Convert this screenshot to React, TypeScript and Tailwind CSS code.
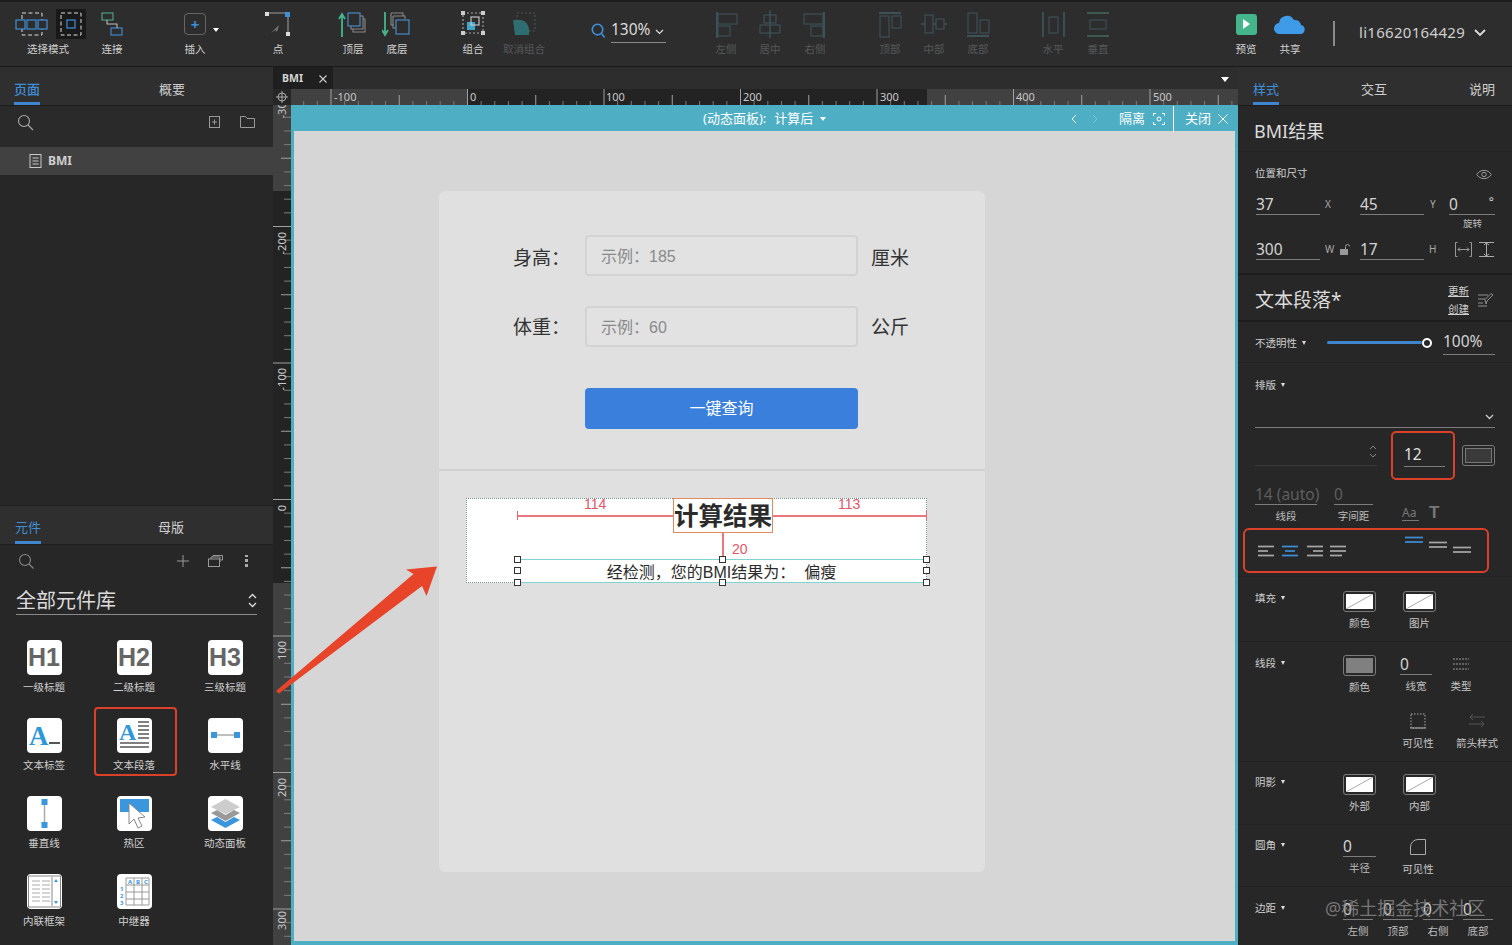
import React from "react";

const ToolItem = ({ label, dim, className, children }: { label: string; dim?: boolean; className?: string; children: React.ReactNode }) => (
  <div className={`flex w-[44px] shrink-0 flex-col items-center ${className ?? ""}`}>
    <div className="flex h-[30px] items-center justify-center">{children}</div>
    <span className={`mt-[2px] whitespace-nowrap text-[10.5px] leading-[16px] ${dim ? "text-[#55595a]" : "text-[#d2d2d2]"}`}>{label}</span>
  </div>
);

const Ic = ({ w = 30, h = 28, children }: { w?: number; h?: number; children: React.ReactNode }) => (
  <svg width={w} height={h} viewBox={`0 0 ${w} ${h}`} fill="none" strokeWidth="1.1">{children}</svg>
);

const AlignIcon = ({ kind }: { kind: string }) => {
  const c = "#3c5258";
  if (kind === "left") return <Ic><path d="M6 2v26" stroke={c} strokeWidth="2" /><rect x="7" y="4" width="19" height="10" stroke={c} /><rect x="7" y="16" width="12" height="10" stroke={c} /></Ic>;
  if (kind === "center") return <Ic><path d="M15 0v28" stroke={c} strokeWidth="1.5" /><rect x="9" y="5" width="12" height="8" stroke={c} /><rect x="5" y="15" width="20" height="8" stroke={c} /></Ic>;
  if (kind === "right") return <Ic><path d="M24 2v26" stroke={c} strokeWidth="2" /><rect x="4" y="4" width="19" height="10" stroke={c} /><rect x="11" y="16" width="12" height="10" stroke={c} /></Ic>;
  if (kind === "top") return <Ic><path d="M4 3h22" stroke={c} strokeWidth="2" /><rect x="5" y="6" width="9" height="21" stroke={c} /><rect x="17" y="6" width="9" height="12" stroke={c} /></Ic>;
  if (kind === "mid") return <Ic><path d="M2 14h26" stroke={c} strokeWidth="1.5" /><rect x="6" y="5" width="8" height="18" fill="#2d2d2d" stroke={c} /><rect x="17" y="9" width="8" height="10" fill="#2d2d2d" stroke={c} /></Ic>;
  if (kind === "bottom") return <Ic><path d="M4 26h22" stroke={c} strokeWidth="2" /><rect x="5" y="3" width="9" height="20" stroke={c} /><rect x="17" y="10" width="9" height="13" stroke={c} /></Ic>;
  if (kind === "h") return <Ic><path d="M5 2v25M26 2v25" stroke={c} strokeWidth="1.8" /><rect x="11" y="7" width="9" height="16" stroke={c} /></Ic>;
  return <Ic><path d="M4 3h22M4 26h22" stroke="#3c5a50" strokeWidth="1.8" /><rect x="7" y="10" width="16" height="9" stroke={c} /></Ic>;
};

const Toolbar = () => (
  <div className="flex h-[67px] shrink-0 border-b border-[#191919] border-t-2 border-t-[#1d1d1d] bg-[#2d2d2d] pt-[7px]">
    <div className="ml-[8px] flex w-[80px] shrink-0 flex-col items-center">
      <div className="flex h-[30px] items-center">
        <svg width="76" height="30" viewBox="0 0 76 30" fill="none">
          <rect x="12" y="4" width="20" height="22" stroke="#ddd" strokeDasharray="4 2.5" />
          <rect x="6" y="11" width="9" height="9" fill="#2d2d2d" stroke="#3f8ed8" strokeWidth="1.2" />
          <rect x="17" y="11" width="9" height="9" fill="#2d2d2d" stroke="#3f8ed8" strokeWidth="1.2" />
          <rect x="28" y="11" width="9" height="9" fill="#2d2d2d" stroke="#3f8ed8" strokeWidth="1.2" />
          <rect x="46" y="0" width="30" height="30" fill="#191919" />
          <rect x="51" y="4" width="20" height="22" stroke="#ddd" strokeDasharray="4 2.5" />
          <rect x="57" y="11" width="8" height="8" stroke="#3f8ed8" strokeWidth="1.2" />
        </svg>
      </div>
      <span className="mt-[2px] text-[10.5px] leading-[16px] text-[#d2d2d2]">选择模式</span>
    </div>
    <ToolItem label="连接" className="ml-[2px]">
      <Ic>
        <rect x="5" y="3" width="11" height="7" stroke="#4fa888" />
        <rect x="14" y="18" width="11" height="7" stroke="#3f8ed8" />
        <path d="M10 10v4h10v4" stroke="#bbb" />
      </Ic>
    </ToolItem>
    <ToolItem label="插入" className="ml-[39px]">
      <div className="relative flex h-[22px] w-[22px] items-center justify-center rounded-[4px] border border-[#666] text-[15px] font-bold leading-none text-[#3f8ed8]">
        +
        <span className="absolute left-[28px] top-[14px] h-0 w-0 border-x-[3px] border-t-[4px] border-x-transparent border-t-white" />
      </div>
    </ToolItem>
    <ToolItem label="点" className="ml-[39px]">
      <Ic>
        <path d="M4 3h21v21" stroke="#999" />
        <rect x="2" y="2" width="4" height="4" fill="#ddd" />
        <rect x="22" y="2" width="5" height="5" fill="#3f8ed8" />
        <rect x="23" y="22" width="4" height="4" fill="#ddd" />
        <path d="M8 23l8-8-2 7-1.5-2z" fill="#777" />
      </Ic>
    </ToolItem>
    <ToolItem label="顶层" className="ml-[31px]">
      <Ic>
        <path d="M4 27V6M1 9l3-5 3 5" stroke="#45b58c" strokeWidth="1.8" />
        <rect x="10" y="3" width="12" height="13" fill="#2d2d2d" stroke="#4a93d4" />
        <path d="M22 6h3v13H13v-3M25 9h2v13H15v-3" stroke="#888" />
      </Ic>
    </ToolItem>
    <ToolItem label="底层">
      <Ic>
        <path d="M3 2v21M0 20l3 5 3-5" stroke="#45b58c" strokeWidth="1.8" />
        <path d="M9 3h12v3M11 6h12v3" stroke="#888" />
        <path d="M9 3v12h3M11 6v12h3" stroke="#888" />
        <rect x="14" y="10" width="13" height="14" stroke="#4a93d4" />
      </Ic>
    </ToolItem>
    <ToolItem label="组合" className="ml-[32px]">
      <Ic>
        <rect x="5" y="3" width="20" height="20" stroke="#aaa" strokeDasharray="2 2" />
        <rect x="3" y="1" width="4" height="4" fill="#ccc" />
        <rect x="23" y="1" width="4" height="4" fill="#ccc" />
        <rect x="3" y="21" width="4" height="4" fill="#ccc" />
        <rect x="23" y="21" width="4" height="4" fill="#ccc" />
        <rect x="9" y="12" width="8" height="8" fill="#3fa6c8" />
        <rect x="13" y="7" width="8" height="8" stroke="#ccc" />
      </Ic>
    </ToolItem>
    <ToolItem label="取消组合" dim className="ml-[7px]">
      <Ic>
        <rect x="8" y="3" width="18" height="18" stroke="#4a5457" strokeDasharray="2 2" />
        <path d="M4 10h8a11 11 0 0 1 8 9v6H6z" fill="#2e6e70" />
      </Ic>
    </ToolItem>
    <div className="ml-[44px] mt-[6px] flex h-[30px] w-[78px] shrink-0 items-center">
      <svg width="16" height="17" viewBox="0 0 17 18" fill="none" stroke="#3f8ed8" strokeWidth="1.7">
        <circle cx="8" cy="8" r="5.6" />
        <path d="M12 12l3.5 4.500" />
      </svg>
      <div className="ml-[5px] flex h-[25px] w-[55px] items-center whitespace-nowrap border-b border-[#8a8a8a] text-[15.5px] leading-none text-[#dcdcdc]">
        130%
        <svg className="ml-[5px] mt-[4px]" width="9" height="6" viewBox="0 0 9 6" fill="none" stroke="#ddd" strokeWidth="1.2"><path d="M1 1l3.500 3.500L8 1" /></svg>
      </div>
    </div>
    <ToolItem label="左侧" dim className="ml-[36px]"><AlignIcon kind="left" /></ToolItem>
    <ToolItem label="居中" dim><AlignIcon kind="center" /></ToolItem>
    <ToolItem label="右侧" dim className="ml-[1px]"><AlignIcon kind="right" /></ToolItem>
    <ToolItem label="顶部" dim className="ml-[31px]"><AlignIcon kind="top" /></ToolItem>
    <ToolItem label="中部" dim><AlignIcon kind="mid" /></ToolItem>
    <ToolItem label="底部" dim><AlignIcon kind="bottom" /></ToolItem>
    <ToolItem label="水平" dim className="ml-[31px]"><AlignIcon kind="h" /></ToolItem>
    <ToolItem label="垂直" dim className="ml-[1px]"><AlignIcon kind="v" /></ToolItem>
    <ToolItem label="预览" className="ml-[104px]">
      <div className="flex h-[21px] w-[21px] items-center justify-center rounded-[3px] bg-[#45b58c]">
        <div className="h-0 w-0 border-y-[5px] border-l-[7px] border-y-transparent border-l-white" />
      </div>
    </ToolItem>
    <ToolItem label="共享">
      <svg width="32" height="21" viewBox="0 0 32 21">
        <path d="M6 20a5.500 5.500 0 0 1-1-11 8 8 0 0 1 15-3 6 6 0 0 1 7 5 4.600 4.600 0 0 1 0 9z" fill="#3f9be8" />
      </svg>
    </ToolItem>
    <div className="ml-[21px] mt-[12px] h-[25px] w-[2px] bg-[#8a8a8a]" />
    <div className="ml-[24px] mt-[13px] text-[15px] leading-[20px] tracking-[0.3px] text-[#cfcfcf]">li16620164429</div>
    <svg className="ml-[9px] mt-[20px]" width="12" height="8" viewBox="0 0 12 8" fill="none" stroke="#ddd" strokeWidth="1.8"><path d="M1 1l5 5 5-5" /></svg>
  </div>
);

const Widget = ({ label, children }: { label: string; children: React.ReactNode }) => (
  <div className="flex h-[78px] flex-col items-center">
    <div className="flex h-[35px] w-[35px] items-center justify-center overflow-hidden rounded-[4px] bg-white">{children}</div>
    <span className="mt-[4px] whitespace-nowrap text-[10.5px] leading-[16px] text-[#d0d0d0]">{label}</span>
  </div>
);

const HeadingIcon = ({ t }: { t: string }) => (
  <span className="font-['Liberation_Sans',sans-serif] text-[25px] font-bold leading-none text-[#666]">{t}</span>
);

const LeftPanel = () => (
  <div className="flex w-[273px] shrink-0 flex-col overflow-hidden bg-[#272727]">
    <div className="flex h-[39px] shrink-0 border-b border-[#1c1c1c] bg-[#2f2f2f] pl-[14px] text-[13px]">
      <div className="flex h-[38px] w-[26px] items-start justify-center border-b-[3px] border-[#3f86cf] pt-[13px] font-medium leading-[18px] text-[#3f8ed8]">页面</div>
      <div className="ml-[119px] pt-[13px] leading-[18px] text-[#cfcfcf]">概要</div>
    </div>
    <div className="flex h-[41px] shrink-0 items-center bg-[#2a2a2a] pb-[9px] pl-[17px]">
      <svg width="17" height="17" viewBox="0 0 17 17" fill="none" stroke="#aaa" strokeWidth="1.1"><circle cx="7" cy="7" r="5.500" /><path d="M11 11l5 5" /></svg>
      <svg className="ml-[175px]" width="11" height="12" viewBox="0 0 11 12" fill="none" stroke="#999"><rect x="0.5" y="0.5" width="10" height="11" /><path d="M5.500 3.500v5M3 6h5" /></svg>
      <svg className="ml-[20px]" width="15" height="12" viewBox="0 0 15 12" fill="none" stroke="#999"><path d="M0.500 11.500V0.500h5l1.500 2h7.500v9z" /></svg>
    </div>
    <div className="flex h-[28px] shrink-0 items-center bg-[#414141] pl-[29px] text-[12px] font-bold text-[#cfcfcf]">
      <svg className="mr-[6px]" width="13" height="14" viewBox="0 0 13 14" fill="none" stroke="#c8c8c8"><rect x="1" y="0.5" width="11" height="13" /><path d="M3.500 4h6M3.500 7h6M3.500 10h6" /></svg>
      BMI
    </div>
    <div className="h-[330px] shrink-0" />
    <div className="flex h-[40px] shrink-0 border-y border-[#1f1f1f] bg-[#2f2f2f] pl-[15px] text-[13px]">
      <div className="flex h-[38px] w-[26px] justify-center border-b-[3px] border-[#3f86cf] pt-[12px] leading-[18px] text-[#3f8ed8]">元件</div>
      <div className="ml-[117px] pt-[12px] leading-[18px] text-[#cfcfcf]">母版</div>
    </div>
    <div className="flex h-[35px] shrink-0 items-center pb-[4px] pl-[18px]">
      <svg width="16" height="16" viewBox="0 0 16 16" fill="none" stroke="#888" strokeWidth="1.1"><circle cx="7" cy="7" r="5.500" /><path d="M11 11l4.500 4.500" /></svg>
      <svg className="ml-[143px]" width="12" height="12" viewBox="0 0 12 12" fill="none" stroke="#999"><path d="M6 0v12M0 6h12" /></svg>
      <svg className="ml-[19px]" width="15" height="12" viewBox="0 0 15 12" fill="none" stroke="#999"><rect x="0.5" y="4" width="11" height="7.500" /><path d="M3 4V2h9v5h-1M5 2V0.500h9.500V5H13" /></svg>
      <div className="ml-[22px] flex flex-col gap-[2px]">
        <span className="h-[2px] w-[3px] bg-[#aaa]" />
        <span className="h-[3px] w-[3px] bg-[#aaa]" />
        <span className="h-[3px] w-[3px] bg-[#aaa]" />
      </div>
    </div>
    <div className="mx-[16px] mt-[7px] flex h-[28px] shrink-0 items-center justify-between border-b border-[#8a8a8a] text-[20px] leading-none text-[#dcdcdc]">
      全部元件库
      <svg width="9" height="15" viewBox="0 0 9 15" fill="none" stroke="#ddd" strokeWidth="1.3"><path d="M1 5l3.500-3.500L8 5M1 10l3.500 3.500L8 10" /></svg>
    </div>
    <div className="mt-[25px] grid w-[270px] shrink-0 grid-cols-[88px_92px_90px]">
      <Widget label="一级标题"><HeadingIcon t="H1" /></Widget>
      <Widget label="二级标题"><HeadingIcon t="H2" /></Widget>
      <Widget label="三级标题"><HeadingIcon t="H3" /></Widget>
      <Widget label="文本标签">
        <svg width="35" height="35" viewBox="0 0 35 35">
          <text x="2" y="27" fontSize="27" fontWeight="700" fontFamily="Liberation Serif" fill="#2f97d8">A</text>
          <rect x="22" y="24" width="11" height="2" fill="#555" />
        </svg>
      </Widget>
      <div className="relative">
        <Widget label="文本段落">
          <svg width="35" height="35" viewBox="0 0 35 35">
            <text x="2" y="22" fontSize="24" fontWeight="700" fontFamily="Liberation Serif" fill="#2f97d8">A</text>
            <path d="M21 4h11M21 8h11M21 12h11M21 16h11M21 20h11M3 25h29M3 29h29" stroke="#555" strokeWidth="1.6" />
          </svg>
        </Widget>
        <div className="absolute left-[6px] top-[-11px] h-[69px] w-[83px] rounded-[4px] border-[2px] border-[#d9412b]" />
      </div>
      <Widget label="水平线">
        <svg width="35" height="35" viewBox="0 0 35 35"><path d="M6 17h23" stroke="#aaa" strokeWidth="1.5" /><rect x="3" y="14" width="6" height="6" fill="#3a97dd" /><rect x="26" y="14" width="6" height="6" fill="#3a97dd" /></svg>
      </Widget>
      <Widget label="垂直线">
        <svg width="35" height="35" viewBox="0 0 35 35"><path d="M17.500 6v23" stroke="#aaa" strokeWidth="1.5" /><rect x="14.500" y="3" width="6" height="6" fill="#3a97dd" /><rect x="14.500" y="26" width="6" height="6" fill="#3a97dd" /></svg>
      </Widget>
      <Widget label="热区">
        <svg width="35" height="35" viewBox="0 0 35 35"><rect x="3" y="3" width="29" height="13" fill="#3a97dd" /><path d="M12 7v21l5-5 4 9 4-2-4-8 7-1z" fill="#fff" stroke="#888" /></svg>
      </Widget>
      <Widget label="动态面板">
        <svg width="35" height="35" viewBox="0 0 35 35"><path d="M17.500 3L32 11 17.500 18 3 11z" fill="#ccc" /><path d="M3 17l6-3 8.500 5 8.500-5 6 3-14.500 8z" fill="#999" /><path d="M3 24l6-3 8.500 5 8.500-5 6 3-14.500 8z" fill="#3a97dd" /></svg>
      </Widget>
      <Widget label="内联框架">
        <svg width="35" height="35" viewBox="0 0 35 35" fill="none"><rect x="1.500" y="2" width="32" height="31" stroke="#888" /><path d="M5 7h8M15 7h8M5 11h8M15 11h8M5 15h8M15 15h8M5 19h8M15 19h8M5 23h8M15 23h8M5 27h8M15 27h8" stroke="#aaa" /><path d="M25 3v29" stroke="#888" /><path d="M29 5l-2 3h4zM29 30l-2-3h4z" fill="#3a97dd" /></svg>
      </Widget>
      <Widget label="中继器">
        <svg width="35" height="35" viewBox="0 0 35 35" fill="none"><path d="M9 4h23v27H9zM9 11h23M9 18h23M9 25h23M17 4v27M25 4v27" stroke="#999" /><text x="11" y="10" fontSize="6" fontWeight="700" fill="#3a97dd">A</text><text x="19" y="10" fontSize="6" fontWeight="700" fill="#3a97dd">B</text><text x="27" y="10" fontSize="6" fontWeight="700" fill="#3a97dd">C</text><text x="3" y="17" fontSize="6" fontWeight="700" fill="#3a97dd">1</text><text x="3" y="24" fontSize="6" fontWeight="700" fill="#3a97dd">2</text><text x="3" y="31" fontSize="6" fontWeight="700" fill="#3a97dd">3</text></svg>
      </Widget>
    </div>
  </div>
);

const hLabels = [[331, "-100"], [467, "0"], [603, "100"], [740, "200"], [877, "300"], [1013, "400"], [1150, "500"]] as [number, string][];
const vLabels = [[90, "-300"], [226, "-200"], [362, "-100"], [499, "0"], [635, "100"], [772, "200"], [905, "300"]] as [number, string][];

const HRuler = () => (
  <svg className="block" width="965" height="16" viewBox="273 89 965 16">
    <rect x="273" y="89" width="965" height="16" fill="#414141" />
    <rect x="273" y="89" width="18" height="16" fill="#262626" />
    <rect x="467" y="89" width="460" height="16" fill="#232323" />
    {Array.from({ length: 71 }, (_, i) => {
      const x = 331 + (i - 3) * 13.65;
      if (x < 292) return null;
      const big = (i - 3) % 10 === 0;
      const mid = (i - 3) % 5 === 0;
      return <path key={i} d={`M${x} ${big ? 89 : mid ? 95 : 101}V105`} stroke={big || mid ? "#a0a0a0" : "#7c7c7c"} />;
    })}
    {hLabels.map(([x, t]) => (
      <text key={t} x={x + 3} y="101" fontSize="11" fill="#c8c8c8" fontFamily="Noto Sans">{t}</text>
    ))}
    <circle cx="282" cy="97" r="4" fill="none" stroke="#aaa" />
    <path d="M282 91v12M276 97h12" stroke="#aaa" />
  </svg>
);

const VRuler = () => (
  <svg className="block shrink-0" width="18" height="840" viewBox="0 105 18 840">
    <rect x="0" y="105" width="18" height="840" fill="#414141" />
    <rect x="0" y="191" width="18" height="392" fill="#232323" />
    {Array.from({ length: 63 }, (_, i) => {
      const y = 90 + i * 13.65;
      if (y < 106) return null;
      const big = i % 10 === 0;
      const mid = i % 5 === 0;
      return <path key={i} d={`M${big ? 0 : mid ? 8 : 11} ${y}H18`} stroke={big || mid ? "#a0a0a0" : "#7c7c7c"} />;
    })}
    {vLabels.map(([y, t]) => (
      <text key={t} x="0" y="0" textAnchor="end" transform={`translate(13 ${y + 6}) rotate(-90)`} fontSize="11" fill="#c8c8c8" fontFamily="Noto Sans">{t}</text>
    ))}
  </svg>
);

const Handle = ({ className }: { className: string }) => (
  <span className={`absolute h-[7px] w-[7px] border border-[#333] bg-white ${className}`} />
);

const FormRow = ({ label, hint, unit, className, lift, hintLift }: { label: string; hint: string; unit: string; className?: string; lift: string; hintLift: string }) => (
  <div className={`flex h-[41px] items-center ${className ?? ""}`}>
    <span className={`w-[72px] whitespace-nowrap text-[19px] text-[#333] ${lift}`}>{label}</span>
    <div className={`flex h-[41px] w-[273px] items-center rounded-[4px] border-[2px] border-[#d3d3d3] bg-[#e2e2e2] pl-[14px] text-[16px] text-[#8a8a8a] ${hintLift}`}>{hint}</div>
    <span className={`ml-[13px] text-[19px] text-[#333] ${lift}`}>{unit}</span>
  </div>
);

const Canvas = () => (
  <div className="relative flex min-w-0 flex-1 flex-col bg-[#232323]">
    <div className="flex h-[22px] shrink-0 bg-[#2d2d2d]">
      <div className="flex w-[60px] items-center bg-[#1f1f1f] pl-[9px] pt-[1px] text-[10.5px] font-bold leading-none text-[#d5d5d5]">
        BMI
        <svg className="ml-[16px]" width="8" height="8" viewBox="0 0 8 8" stroke="#ccc" strokeWidth="1.1"><path d="M0.500 0.500l7 7M7.500 0.500l-7 7" /></svg>
      </div>
      <div className="ml-auto mr-[9px] mt-[10px] h-0 w-0 border-x-[4px] border-t-[5px] border-x-transparent border-t-white" />
    </div>
    <HRuler />
    <div className="flex min-h-0 flex-1">
      <VRuler />
      <div className="flex min-w-0 flex-1 flex-col border-x-[3px] border-b-[4px] border-[#4eaec4] bg-[#d6d6d6]">
        <div className="-mx-[3px] flex h-[26px] shrink-0 items-center whitespace-nowrap bg-[#4eaec4] pt-[1px] text-[13px] text-white">
          <div className="ml-[412px] flex w-[122px] items-center">
            (动态面板):
            <span className="ml-[8px]">计算后</span>
            <span className="ml-[7px] h-0 w-0 border-x-[3.5px] border-t-[4px] border-x-transparent border-t-white" />
          </div>
          <svg className="ml-[246px]" width="6" height="10" viewBox="0 0 6 10" fill="none" stroke="#fff"><path d="M5 1L1 5l4 4" /></svg>
          <svg className="ml-[15px]" width="6" height="10" viewBox="0 0 6 10" fill="none" stroke="#7cc6d6"><path d="M1 1l4 4-4 4" /></svg>
          <span className="ml-[21px] w-[26px]">隔离</span>
          <svg className="ml-[8px]" width="12" height="12" viewBox="0 0 12 12" fill="none" stroke="#fff"><path d="M0.500 3V0.500H3M9 0.500h2.500V3M11.500 9v2.500H9M3 11.500H0.500V9" /><circle cx="6" cy="6" r="2" /></svg>
          <div className="ml-[8px] h-[26px] w-px bg-white" />
          <span className="ml-[11px] w-[26px]">关闭</span>
          <svg className="ml-[7px]" width="10" height="10" viewBox="0 0 10 10" stroke="#fff"><path d="M0.500 0.500l9 9M9.500 0.500l-9 9" /></svg>
        </div>
        <div className="relative min-h-0 flex-1">
          <div className="ml-[145px] mt-[60px] h-[681px] w-[546px] rounded-[6px] bg-[#e0e0e0] font-['Liberation_Sans','Noto_Sans_CJK_SC',sans-serif]">
            <div className="h-[280px] border-b-2 border-[#d0d0d0] pt-[44px]">
              <FormRow label="身高：" hint="示例：185" unit="厘米" className="ml-[74px]" lift="pt-[8px]" hintLift="pt-[2px]" />
              <FormRow label="体重：" hint="示例：60" unit="公斤" className="ml-[74px] mt-[30px]" lift="pt-[4px]" hintLift="pt-[3px]" />
              <div className="ml-[146px] mt-[41px] flex h-[41px] w-[273px] items-center justify-center rounded-[4px] bg-[#3a7fdb] text-[16px] text-white">一键查询</div>
            </div>
            <div className="relative ml-[27px] mt-[27px] h-[85px] w-[461px] border border-dotted border-[#6f8f89] bg-white">
              <div className="absolute left-[206px] top-[-1px] flex h-[35px] w-[100px] items-center justify-center whitespace-nowrap border border-[#e08a5e] pt-[3px] text-[24.5px] font-bold text-[#2b2b2b]">计算结果</div>
              <div className="absolute left-[50px] top-[16px] h-[1.5px] w-[156px] bg-[#e8777f]" />
              <div className="absolute left-[50px] top-[12px] h-[9px] w-px bg-[#e26a72]" />
              <div className="absolute left-[306px] top-[16px] h-[1.5px] w-[153px] bg-[#e8777f]" />
              <div className="absolute left-[459px] top-[12px] h-[9px] w-px bg-[#e26a72]" />
              <div className="absolute left-[255px] top-[34px] h-[27px] w-[1.5px] bg-[#e8777f]" />
              <span className="absolute left-[117px] top-[-4px] text-[14px] leading-[18px] text-[#e0566a]">114</span>
              <span className="absolute left-[371px] top-[-4px] text-[14px] leading-[18px] text-[#e0566a]">113</span>
              <span className="absolute left-[265px] top-[41px] text-[14px] leading-[18px] text-[#e0566a]">20</span>
              <div className="absolute left-[50px] top-[60px] flex h-[24px] w-[409px] items-center justify-center border-y border-[#7fd4d0] pt-[3px] text-[16px] text-[#2b2b2b]">
                经检测，您的BMI结果为：&nbsp;&nbsp;偏瘦
              </div>
              <Handle className="left-[47px] top-[57px]" />
              <Handle className="left-[47px] top-[68px]" />
              <Handle className="left-[47px] top-[80px]" />
              <Handle className="left-[252px] top-[57px]" />
              <Handle className="left-[252px] top-[80px]" />
              <Handle className="left-[456px] top-[57px]" />
              <Handle className="left-[456px] top-[68px]" />
              <Handle className="left-[456px] top-[80px]" />
            </div>
          </div>
        </div>
      </div>
    </div>
    <svg className="pointer-events-none absolute left-0 top-[490px]" width="175" height="145" viewBox="0 0 175 145">
      <path d="M3 134L140.500 17 133 12.500 164 9.500 153.500 39 149 29 6 136.500z" fill="#e8442a" />
    </svg>
  </div>
);

const Field = ({ v, w, label, dim, className }: { v: string; w: string; label?: string; dim?: boolean; className?: string }) => (
  <div className={`shrink-0 ${w} ${className ?? ""}`}>
    <div className={`h-[20px] whitespace-nowrap border-b border-[#7c7c7c] text-[15.5px] leading-[18px] ${dim ? "text-[#5e5e5e]" : "text-[#d4d4d4]"}`}>{v}</div>
    {label && <div className="mt-[3px] text-center text-[10.5px] leading-[16px] text-[#bdbdbd]">{label}</div>}
  </div>
);

const Swatch = ({ fill, label, slash = true }: { fill: string; label: string; slash?: boolean }) => (
  <div className="flex w-[33px] flex-col items-center">
    <div className="relative h-[21px] w-[33px] overflow-hidden rounded-[3px] border border-[#7a7a7a] p-[2px]">
      <svg className="block" width="27" height="15" viewBox="0 0 27 15">
        <rect width="27" height="15" fill={fill} />
        {slash && <path d="M0 15L27 0" stroke="#aaa" />}
      </svg>
    </div>
    <span className="mt-[3px] whitespace-nowrap text-[10.5px] leading-[16px] text-[#c8c8c8]">{label}</span>
  </div>
);

const SecLabel = ({ t }: { t: string }) => (
  <span className="flex items-center text-[10.5px] leading-[16px] text-[#cfcfcf]">
    {t}
    <span className="ml-[5px] h-0 w-0 border-x-[2.5px] border-t-[4px] border-x-transparent border-t-[#ddd]" />
  </span>
);

const Lines = ({ rows, c = "#a8a8a8" }: { rows: [number, number, number][]; c?: string }) => (
  <svg className="block" width="18" height="12" viewBox="0 0 18 12" stroke={c} strokeWidth="1.7">
    {rows.map(([y, a, b]) => <path key={y} d={`M${a} ${y}H${b}`} />)}
  </svg>
);

const RightPanel = () => (
  <div className="relative flex w-[274px] shrink-0 flex-col bg-[#272727]">
    <div className="flex h-[39px] shrink-0 border-b border-[#1c1c1c] bg-[#2f2f2f] pl-[15px] text-[13px]">
      <div className="flex h-[38px] w-[26px] justify-center border-b-[3px] border-[#3f86cf] pt-[13px] leading-[18px] text-[#3f8ed8]">样式</div>
      <div className="ml-[82px] pt-[13px] leading-[18px] text-[#cfcfcf]">交互</div>
      <div className="ml-[82px] pt-[13px] leading-[18px] text-[#cfcfcf]">说明</div>
    </div>
    <div className="flex h-[46px] shrink-0 items-center border-b border-[#222] pl-[16px] pt-[5px] text-[18px] text-[#dcdcdc]">BMI结果</div>
    <div className="h-[123px] shrink-0 border-b-2 border-[#1e1e1e] pl-[18px] pt-[14px]">
      <div className="-ml-[1px] flex h-[16px] items-center justify-between pr-[20px] text-[10.5px] text-[#cfcfcf]">
        位置和尺寸
        <svg width="16" height="11" viewBox="0 0 16 11" fill="none" stroke="#999"><path d="M0.700 5.500C4 0 12 0 15.300 5.500 12 11 4 11 0.700 5.500z" /><circle cx="8" cy="5.500" r="2.200" /></svg>
      </div>
      <div className="mt-[13px] flex h-[45px] items-start">
        <Field v="37" w="w-[64px]" />
        <span className="ml-[5px] mt-[1px] w-[35px] text-[10px] leading-[16px] text-[#aaa]">X</span>
        <Field v="45" w="w-[64px]" />
        <span className="ml-[6px] mt-[1px] w-[19px] text-[10px] leading-[16px] text-[#aaa]">Y</span>
        <div className="w-[46px]">
          <div className="flex h-[20px] justify-between border-b border-[#7c7c7c] pr-[1px] text-[15.5px] leading-[18px] text-[#d4d4d4]">0<span className="text-[12px] leading-[14px]">°</span></div>
          <div className="ml-[14px] mt-[2px] text-[9.5px] leading-[14px] text-[#bdbdbd]">旋转</div>
        </div>
      </div>
      <div className="flex h-[20px] items-start">
        <Field v="300" w="w-[64px]" />
        <span className="ml-[5px] mt-[1px] w-[15px] text-[10px] leading-[16px] text-[#aaa]">W</span>
        <svg className="mt-[4px]" width="10" height="11" viewBox="0 0 10 11" fill="none"><rect x="0" y="5" width="8" height="6" fill="#999" /><path d="M5.500 5V2.500a2 2 0 0 1 4 0" stroke="#999" /></svg>
        <Field v="17" w="w-[64px]" className="ml-[10px]" />
        <span className="ml-[5px] mt-[1px] w-[26px] text-[10px] leading-[16px] text-[#aaa]">H</span>
        <svg className="mt-[2px]" width="17" height="15" viewBox="0 0 17 15" fill="none" stroke="#999"><path d="M0.500 0.500h2M0.500 0.500v14h2M16.500 0.500h-2M16.500 0.500v14h-2M3 7.500h11M3 7.500l2-2M3 7.500l2 2M14 7.500l-2-2M14 7.500l-2 2" /></svg>
        <svg className="ml-[7px] mt-[2px]" width="15" height="15" viewBox="0 0 15 15" fill="none" stroke="#aaa"><path d="M0 0.500h15M0 14.500h15M7.500 1v13M5 3l2.500-2 2.500 2M5 12l2.500 2 2.500-2" /></svg>
      </div>
    </div>
    <div className="flex h-[47px] shrink-0 items-center border-b-2 border-[#1e1e1e] pl-[17px] pt-[5px]">
      <span className="w-[84px] whitespace-nowrap text-[19px] text-[#dcdcdc]">文本段落*</span>
      <div className="ml-[109px] flex flex-col text-[10.5px] leading-[18px] text-[#cfcfcf] underline">
        <span>更新</span>
        <span>创建</span>
      </div>
      <svg className="ml-[9px]" width="16" height="14" viewBox="0 0 16 14" fill="none" stroke="#8f8f8f"><path d="M0 2h10M0 6h7M0 10h5M0 13h9M8 11l1-3 6-6-2-1.500-6 6z" /></svg>
    </div>
    <div className="flex h-[41px] shrink-0 items-center border-b border-[#222] pl-[17px] pt-[1px]">
      <span className="w-[51px]"><SecLabel t="不透明性" /></span>
      <div className="ml-[21px] flex items-center">
        <div className="h-[3px] w-[95px] rounded-full bg-[#3f86cf]" />
        <div className="h-[10px] w-[10px] rounded-full border-2 border-white bg-[#272727]" />
      </div>
      <div className="ml-[11px] h-[25px] w-[52px] border-b border-[#7c7c7c] text-[15.5px] leading-[22px] text-[#d4d4d4]">100%</div>
    </div>
    <div className="h-[214px] shrink-0 border-b border-[#222] pl-[17px] pt-[14px]">
      <SecLabel t="排版" />
      <div className="mr-[17px] mt-[14px] flex h-[21px] items-center justify-end border-b border-[#7c7c7c] pr-[1px]">
        <svg width="9" height="6" viewBox="0 0 9 6" fill="none" stroke="#ccc" strokeWidth="1.3"><path d="M1 1l3.500 3.500L8 1" /></svg>
      </div>
      <div className="mt-[3px] flex h-[54px] items-start">
        <div className="relative mt-[13px] flex h-[22px] w-[122px] justify-end border-b border-[#3a3a3a]">
          <svg width="8" height="15" viewBox="0 0 8 15" fill="none" stroke="#888"><path d="M1 5l3-3 3 3M1 10l3 3 3-3" /></svg>
        </div>
        <div className="ml-[14px] h-[49px] w-[64px] rounded-[5px] border-[2px] border-[#d9412b] pl-[11px] pt-[8px]">
          <div className="h-[26px] w-[41px] border-b border-[#7c7c7c] text-[15.5px] leading-[26px] text-[#e0e0e0]">12</div>
        </div>
        <div className="ml-[7px] mt-[14px] h-[21px] w-[33px] rounded-[3px] border border-[#7a7a7a] p-[2px]">
          <div className="h-full w-full border border-[#777] bg-[#3a3a3a]" />
        </div>
      </div>
      <div className="flex h-[43px] items-start">
        <Field v="14 (auto)" w="w-[62px]" label="线段" dim />
        <Field v="0" w="w-[39px]" label="字间距" dim className="ml-[17px]" />
        <div className="ml-[29px] mt-[20px] w-[17px] border-b border-[#777] text-[12px] leading-[15px] text-[#777]">Aa</div>
        <span className="ml-[10px] mt-[19px] font-['Liberation_Sans',sans-serif] text-[17px] font-bold leading-[18px] text-[#777]">T</span>
      </div>
      <div className="-ml-[12px] flex h-[45px] w-[246px] items-center rounded-[6px] border-[2px] border-[#d9412b] pl-[13px]">
        <Lines rows={[[1.5, 0, 16], [6, 0, 10], [10.5, 0, 16]]} />
        <span className="ml-[6px]"><Lines rows={[[1.5, 0, 16], [6, 3, 13], [10.5, 0, 16]]} c="#3f8ed8" /></span>
        <span className="ml-[7px]"><Lines rows={[[1.5, 0, 16], [6, 6, 16], [10.5, 0, 16]]} /></span>
        <span className="ml-[5px]"><Lines rows={[[1.5, 0, 16], [6, 0, 16], [10.5, 0, 12]]} /></span>
        <div className="ml-[57px] flex items-start gap-[6px]">
          <span className="-mt-[8px] block"><Lines rows={[[1.5, 0, 18], [6, 0, 18]]} c="#3f8ed8" /></span>
          <span className="-mt-[3px] block"><Lines rows={[[1.5, 0, 18], [6, 0, 18]]} /></span>
          <span className="mt-[2px] block"><Lines rows={[[1.5, 0, 18], [6, 0, 18]]} /></span>
        </div>
      </div>
    </div>
    <div className="flex h-[65px] shrink-0 border-b border-[#222] pl-[17px] pt-[13px]">
      <div className="w-[88px]"><SecLabel t="填充" /></div>
      <div className="flex gap-[27px] pt-[1px]">
        <Swatch fill="#fff" label="颜色" />
        <Swatch fill="#fff" label="图片" />
      </div>
    </div>
    <div className="h-[120px] shrink-0 border-b border-[#222] pl-[17px] pt-[13px]">
      <div className="flex">
        <div className="w-[88px]"><SecLabel t="线段" /></div>
        <Swatch fill="#808080" slash={false} label="颜色" />
        <Field v="0" w="w-[32px]" label="线宽" className="ml-[24px]" />
        <div className="ml-[17px] flex w-[24px] flex-col items-center">
          <svg className="mt-[1px]" width="16" height="17" viewBox="0 0 16 17" stroke="#999"><path d="M0 3h16M0 8h16M0 13h16" strokeDasharray="2 1" /></svg>
          <span className="mt-[5px] whitespace-nowrap text-[10.5px] leading-[16px] text-[#c8c8c8]">类型</span>
        </div>
      </div>
      <div className="ml-[145px] mt-[18px] flex">
        <div className="flex w-[36px] flex-col items-center">
          <svg width="16" height="16" viewBox="0 0 16 16" fill="none" stroke="#aaa"><rect x="1" y="1" width="14" height="14" strokeDasharray="1.500 1.500" /><path d="M0 15h16" /></svg>
          <span className="mt-[6px] whitespace-nowrap text-[10.5px] leading-[16px] text-[#c8c8c8]">可见性</span>
        </div>
        <div className="ml-[21px] flex w-[40px] flex-col items-center">
          <svg width="16" height="16" viewBox="0 0 16 16" fill="none" stroke="#555"><path d="M16 4H1M4 1L1 4l3 3M0 11h15M12 8l3 3-3 3" /></svg>
          <span className="mt-[6px] whitespace-nowrap text-[10.5px] leading-[16px] text-[#c8c8c8]">箭头样式</span>
        </div>
      </div>
    </div>
    <div className="flex h-[63px] shrink-0 border-b border-[#222] pl-[17px] pt-[12px]">
      <div className="w-[88px]"><SecLabel t="阴影" /></div>
      <div className="flex gap-[27px]">
        <Swatch fill="#fff" label="外部" />
        <Swatch fill="#fff" label="内部" />
      </div>
    </div>
    <div className="flex h-[62px] shrink-0 border-b border-[#222] pl-[17px] pt-[12px]">
      <div className="w-[88px]"><SecLabel t="圆角" /></div>
      <Field v="0" w="w-[33px]" label="半径" />
      <div className="ml-[24px] flex w-[36px] flex-col items-center">
        <svg className="mt-[2px]" width="16" height="16" viewBox="0 0 16 16" fill="none" stroke="#aaa"><path d="M0.500 15.500V8A7.500 7.500 0 0 1 8 0.500h7.500v15z" /></svg>
        <span className="mt-[6px] whitespace-nowrap text-[10.5px] leading-[16px] text-[#c8c8c8]">可见性</span>
      </div>
    </div>
    <div className="flex flex-1 pl-[17px] pt-[13px]">
      <div className="w-[88px]"><SecLabel t="边距" /></div>
      <div className="flex gap-[10px]">
        <Field v="0" w="w-[30px]" label="左侧" />
        <Field v="0" w="w-[30px]" label="顶部" />
        <Field v="0" w="w-[30px]" label="右侧" />
        <Field v="0" w="w-[30px]" label="底部" />
      </div>
    </div>
    <span className="absolute left-[87px] top-[830px] whitespace-nowrap text-[18px] leading-[22px] text-[#8c8c8c]/80">@稀土掘金技术社区</span>
  </div>
);

export default function App() {
  return (
    <div className="flex h-[945px] w-[1512px] flex-col overflow-hidden bg-[#272727] font-['Noto_Sans','Noto_Sans_CJK_SC',sans-serif]">
      <Toolbar />
      <div className="flex min-h-0 flex-1">
        <LeftPanel />
        <Canvas />
        <RightPanel />
      </div>
    </div>
  );
}
